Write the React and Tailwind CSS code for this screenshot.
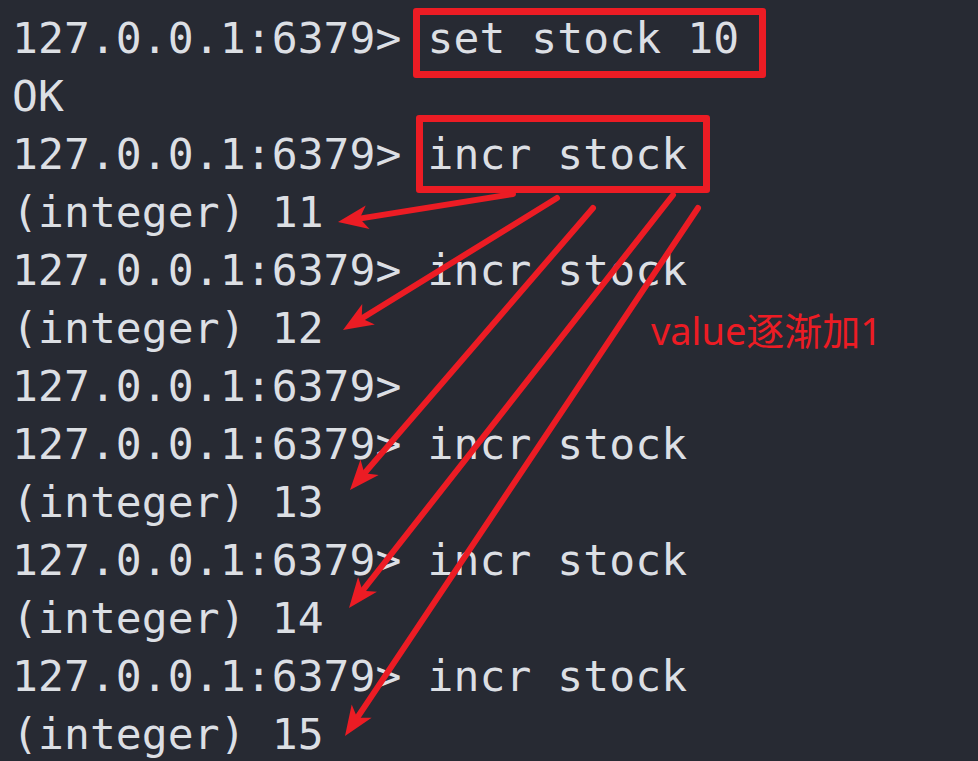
const lines = [
  '127.0.0.1:6379> set stock 10',
  'OK',
  '127.0.0.1:6379> incr stock',
  '(integer) 11',
  '127.0.0.1:6379> incr stock',
  '(integer) 12',
  '127.0.0.1:6379>',
  '127.0.0.1:6379> incr stock',
  '(integer) 13',
  '127.0.0.1:6379> incr stock',
  '(integer) 14',
  '127.0.0.1:6379> incr stock',
  '(integer) 15',
]

// arrows drawn from the incr box down to each result
const arrows = [
  [513, 194, 338, 222],
  [557, 198, 343, 330],
  [593, 208, 350, 490],
  [673, 195, 349, 608],
  [698, 208, 345, 736],
]

function Arrow({ x1, y1, x2, y2 }) {
  const dx = x2 - x1
  const dy = y2 - y1
  const len = Math.hypot(dx, dy)
  const ux = dx / len
  const uy = dy / len
  const head = 30
  const half = 12
  const bx = x2 - ux * head
  const by = y2 - uy * head
  const pts = [
    [x2, y2],
    [bx - uy * half, by + ux * half],
    [x2 - ux * (head - 8), y2 - uy * (head - 8)],
    [bx + uy * half, by - ux * half],
  ]
  return (
    <g>
      <line
        x1={x1}
        y1={y1}
        x2={x2 - ux * 20}
        y2={y2 - uy * 20}
        stroke="#ec1c24"
        strokeWidth="6"
        strokeLinecap="round"
      />
      <polygon points={pts.map((p) => p.join(',')).join(' ')} fill="#ec1c24" />
    </g>
  )
}

export default function App() {
  return (
    <div className="relative w-[978px] h-[761px] overflow-hidden bg-[#272a33]">
      {/* terminal output */}
      <div className="pl-[12px] pt-[9px] font-['DejaVu_Sans_Mono',monospace] text-[43px] tracking-[0.08px] leading-[58px] text-[#dcdfe4] whitespace-pre">
        {lines.map((l, i) => (
          <div key={i}>{l}</div>
        ))}
      </div>

      {/* highlight boxes */}
      <div className="absolute left-[413px] top-[8px] w-[353px] h-[70px] border-[7px] border-[#ec1c24] rounded-[3px]" />
      <div className="absolute left-[416px] top-[115px] w-[294px] h-[78px] border-[7px] border-[#ec1c24] rounded-[3px]" />

      <svg className="absolute left-0 top-0" width="978" height="761">
        {arrows.map(([x1, y1, x2, y2], i) => (
          <Arrow key={i} x1={x1} y1={y1} x2={x2} y2={y2} />
        ))}
      </svg>

      <div className="absolute left-[651px] top-[311px] font-['Noto_Sans','Noto_Sans_CJK_SC',sans-serif] text-[38px] leading-[38px] text-[#ec1c24] whitespace-nowrap">
        value逐渐加1
      </div>
    </div>
  )
}
